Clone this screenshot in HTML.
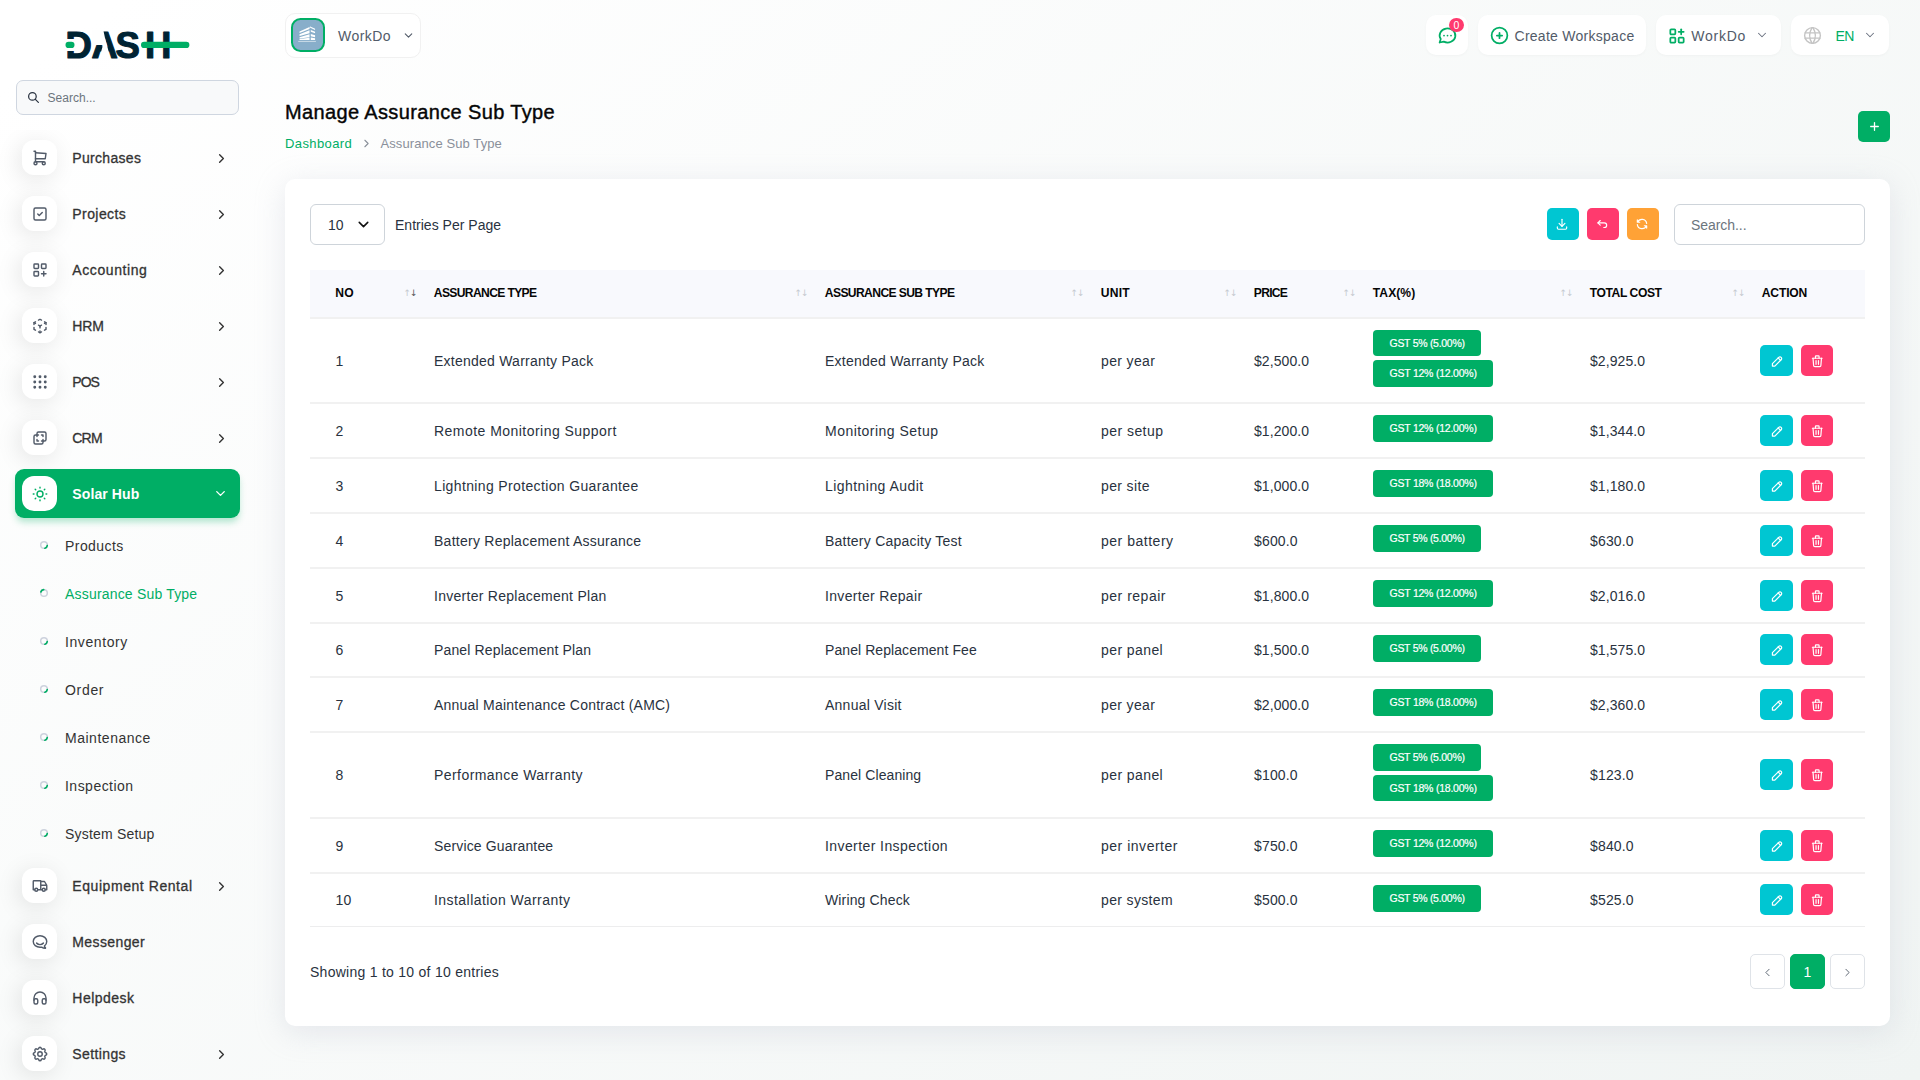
<!DOCTYPE html><html lang="en"><head><meta charset="utf-8"><title>Manage Assurance Sub Type</title><style>*{box-sizing:border-box;margin:0;padding:0}
html,body{width:1920px;height:1080px;overflow:hidden}
body{font-family:"Liberation Sans",sans-serif;font-size:14px;color:#293240;background:linear-gradient(141.55deg,rgba(240,244,243,0) 3.46%,#f0f4f3 99.86%),#fff;position:relative}
.ic{display:block;flex:none}
a{text-decoration:none;color:inherit}
span{white-space:nowrap}
.sidebar{position:absolute;left:0;top:0;width:255px;height:1080px}
.navwrap{position:absolute;left:0;top:130px;width:270px;height:950px;overflow:hidden}
.logo{position:absolute;left:60px;top:25px}
.sbsearch{position:absolute;left:16px;top:80px;width:223px;height:35px;border:1px solid #cfd6e0;border-radius:7px;background:#f8f9fa;display:flex;align-items:center;padding-left:10px;color:#6c757d;font-size:12px}
.sbsearch span{margin-left:7.5px;position:relative;top:.5px}
.item{position:absolute;left:15px;width:225px;height:49px;border-radius:9px;display:flex;align-items:center;padding-left:7px;color:#333}
.micon .ic{position:relative;top:.8px}
.micon{width:35px;height:35px;border-radius:12px;background:#fff;display:flex;align-items:center;justify-content:center;box-shadow:-3px 4px 23px rgba(0,0,0,.1);color:#525b69}
.mtext{margin-left:15.3px;font-size:14px;font-weight:400;-webkit-text-stroke:.3px currentColor;position:relative;top:.5px}
.arr{position:absolute;left:199px;top:18.3px;color:#333}
.item.active{background:#00AE65;color:#fff;box-shadow:0 5px 7px -1px rgba(0,174,101,.3)}
.item.active .micon{color:#00AE65;box-shadow:none}
.item.active .mtext{font-weight:700;-webkit-text-stroke:0}
.item.active .arr{color:#fff;left:197.5px;top:17.2px}
.sub{position:absolute;left:39px;height:24px;display:flex;align-items:center;font-size:14px;color:#333}
.sub .bul{margin-right:16px;position:relative;top:-.5px}
.sub.act{color:#00AE65}
.ws{position:absolute;left:285.2px;top:12.5px;width:136.3px;height:45px;border:1px solid #f1f1f1;border-radius:10px;background:#fff;display:flex;align-items:center;padding-left:4.8px;color:#525b69}
.avatar{width:34px;height:34px;border-radius:9.5px;border:2px solid #00AE65;background:#88aeca;position:relative;overflow:hidden;flex:none}.avatar svg{position:absolute;left:-2px;top:-2px}
.wsn{margin-left:13px;font-size:14px;margin-right:11px;color:#525b69;position:relative;top:.5px}
.hbtn{position:absolute;top:15px;height:40px;padding-top:1.2px;border-radius:10px;background:#fff;display:flex;align-items:center;padding-left:11.5px;color:#525b69;box-shadow:0 1px 3px rgba(0,0,0,.03)}
.ht{font-size:14px;color:#525b69;position:relative;top:.2px}
.ht.en{color:#00AE65}
.hch{position:absolute;right:11.7px;top:12.9px;color:#6b7280}
.bdg{position:absolute;left:23px;top:3px;width:15px;height:14.4px;padding-top:0;border-radius:50%;background:#FF3A6E;color:#fff;font-size:10.5px;display:flex;align-items:center;justify-content:center}
.title{position:absolute;left:285px;top:98px;font-size:20px;font-weight:400;color:#060606;line-height:28px;-webkit-text-stroke:.4px currentColor;white-space:nowrap}
.crumb{position:absolute;left:285px;top:133px;height:20px;display:flex;align-items:center;font-size:13px}
.c1{color:#00AE65}.c2{color:#8a909a}.csep{margin:0 7.5px 0 7.8px}
.addbtn{position:absolute;left:1858px;top:111px;width:32px;height:31px;border-radius:5px;background:#00AE65;display:flex;align-items:center;justify-content:center}
.card{position:absolute;left:285px;top:179px;width:1605px;height:847px;background:#fff;border-radius:10px;box-shadow:0 6px 30px rgba(182,186,203,.3)}
.sel{position:absolute;left:25px;top:25px;width:75px;height:41px;border:1px solid #ced4da;border-radius:6px;display:flex;align-items:center;padding-left:17px;font-size:14px;color:#293240}
.sel span{position:relative;top:.5px}
.sel .ic{margin-left:11px}
.epp{position:absolute;left:110px;top:35.8px;line-height:21px}
.tb{position:absolute;top:29px;width:32px;height:32px;padding:0 1.6px .5px 0;border-radius:5px;display:flex;align-items:center;justify-content:center}
.tsearch{position:absolute;left:1389px;top:25px;width:191px;height:41px;border:1px solid #ced4da;border-radius:6px;display:flex;align-items:center;padding-left:16px;color:#6c757d}
.thead{position:absolute;left:25px;top:91px;width:1555px;height:47px;background:#f8f9fd}
.th{position:absolute;top:15px;font-size:12.1px;font-weight:700;color:#060606;line-height:16px;white-space:nowrap}
.sort{position:absolute;top:14.5px;font-size:9px;line-height:16px;color:#c5c9d0;font-family:"DejaVu Sans",sans-serif;letter-spacing:-1px}
.sort i,.sort b{font-style:normal;font-weight:400}
.sort.s1 b{color:#555}
.tr{position:absolute;left:25px;width:1555px}
.hl{position:absolute;left:25px;width:1555px;height:2px;background:#f1f1f1}
.hl.last{height:1px;background:#ededee}
.td{position:absolute;top:50%;margin-top:-9.9px;line-height:21px;white-space:nowrap;color:#293240}
.tax{position:absolute;left:1063px;top:12px;display:flex;flex-direction:column;align-items:flex-start}
.bg{display:block;height:26.25px;line-height:26px;padding:0 16.5px;background:#00AE65;color:#fff;border-radius:4px;font-size:10.5px;margin-bottom:4px;-webkit-text-stroke:.2px #fff;white-space:nowrap}
.ab{position:absolute;top:50%;margin-top:-15.6px;padding:1.3px 0 0 .8px;width:32px;height:31px;border-radius:5px;display:flex;align-items:center;justify-content:center}
.info{position:absolute;left:25px;top:782.5px;line-height:21px}
.pg{position:absolute;top:775px;width:35px;height:35px;padding-top:1.6px;border:1px solid #dfe3e8;border-radius:5px;display:flex;align-items:center;justify-content:center;background:#fff}
.pg.on{background:#00AE65;border-color:#00AE65;color:#fff;font-size:14px}
</style></head><body>
<nav class="sidebar">
<div class="logo"><svg width="140" height="40" viewBox="60 25 140 40"><text x="65.6 91.5 115.5 145" y="58" font-family="'Liberation Sans',sans-serif" font-weight="700" font-size="36.5" fill="#002333" stroke="#002333" stroke-width="1.1" stroke-linejoin="round">DASH</text><rect x="64" y="39" width="12" height="12" fill="#fefefe"/><polygon points="92.3,30 103.3,30 105,38 106.9,45 108.9,52.5 100.9,52.5 103,45 92.3,45" fill="#fefefe"/><rect x="65.5" y="41.8" width="9" height="6.2" rx="3.1" fill="#00AE65"/><rect x="141" y="41.8" width="48.4" height="6.2" rx="3.1" fill="#00AE65"/></svg></div>
<div class="sbsearch"><svg class="ic" width="13" height="13" viewBox="0 0 24 24" fill="none" stroke="#293240" stroke-width="2.3" stroke-linecap="round" stroke-linejoin="round" ><circle cx="10" cy="10" r="7"/><path d="M21 21l-6 -6"/></svg><span style="letter-spacing:0.019px;">Search...</span></div>
<div class="navwrap">
<a class="item" style="top:3px"><span class="micon"><svg class="ic" width="18" height="18" viewBox="0 0 24 24" fill="none" stroke="currentColor" stroke-width="1.9" stroke-linecap="round" stroke-linejoin="round" ><circle cx="6" cy="19" r="2"/><circle cx="17" cy="19" r="2"/><path d="M17 17h-11v-14h-2"/><path d="M6 5l14 1l-1 7h-13"/></svg></span><span class="mtext" style="letter-spacing:0.316px;">Purchases</span><span class="arr"><svg class="ic" width="15" height="15" viewBox="0 0 24 24" fill="none" stroke="currentColor" stroke-width="2.2" stroke-linecap="round" stroke-linejoin="round" ><path d="M9 6l6 6l-6 6"/></svg></span></a>
<a class="item" style="top:59px"><span class="micon"><svg class="ic" width="18" height="18" viewBox="0 0 24 24" fill="none" stroke="currentColor" stroke-width="1.9" stroke-linecap="round" stroke-linejoin="round" ><rect x="4" y="4" width="16" height="16" rx="2"/><path d="M9 12l2 2l4 -4"/></svg></span><span class="mtext" style="letter-spacing:0.428px;">Projects</span><span class="arr"><svg class="ic" width="15" height="15" viewBox="0 0 24 24" fill="none" stroke="currentColor" stroke-width="2.2" stroke-linecap="round" stroke-linejoin="round" ><path d="M9 6l6 6l-6 6"/></svg></span></a>
<a class="item" style="top:115px"><span class="micon"><svg class="ic" width="18" height="18" viewBox="0 0 24 24" fill="none" stroke="currentColor" stroke-width="1.9" stroke-linecap="round" stroke-linejoin="round" ><rect x="4" y="4" width="6" height="6" rx="1"/><rect x="14" y="4" width="6" height="6" rx="1"/><rect x="4" y="14" width="6" height="6" rx="1"/><path d="M14 17h6m-3 -3v6"/></svg></span><span class="mtext" style="letter-spacing:0.592px;">Accounting</span><span class="arr"><svg class="ic" width="15" height="15" viewBox="0 0 24 24" fill="none" stroke="currentColor" stroke-width="2.2" stroke-linecap="round" stroke-linejoin="round" ><path d="M9 6l6 6l-6 6"/></svg></span></a>
<a class="item" style="top:171px"><span class="micon"><svg class="ic" width="18" height="18" viewBox="0 0 24 24" fill="none" stroke="currentColor" stroke-width="1.9" stroke-linecap="round" stroke-linejoin="round" ><path d="M6 17.6l-2 -1.1v-2.5"/><path d="M4 10v-2.5l2 -1.1"/><path d="M10 4.1l2 -1.1l2 1.1"/><path d="M18 6.4l2 1.1v2.5"/><path d="M20 14v2.5l-2 1.12"/><path d="M14 19.9l-2 1.1l-2 -1.1"/><path d="M12 12l2 -1.1"/><path d="M18 8.6l2 -1.1"/><path d="M12 12l0 2.5"/><path d="M12 18.5l0 2.5"/><path d="M12 12l-2 -1.12"/><path d="M6 8.6l-2 -1.1"/></svg></span><span class="mtext" style="letter-spacing:-0.164px;">HRM</span><span class="arr"><svg class="ic" width="15" height="15" viewBox="0 0 24 24" fill="none" stroke="currentColor" stroke-width="2.2" stroke-linecap="round" stroke-linejoin="round" ><path d="M9 6l6 6l-6 6"/></svg></span></a>
<a class="item" style="top:227px"><span class="micon"><svg class="ic" width="18" height="18" viewBox="0 0 24 24" fill="none" stroke="currentColor" stroke-width="1.9" stroke-linecap="round" stroke-linejoin="round" ><circle cx="5" cy="5" r="1"/><circle cx="12" cy="5" r="1"/><circle cx="19" cy="5" r="1"/><circle cx="5" cy="12" r="1"/><circle cx="12" cy="12" r="1"/><circle cx="19" cy="12" r="1"/><circle cx="5" cy="19" r="1"/><circle cx="12" cy="19" r="1"/><circle cx="19" cy="19" r="1"/></svg></span><span class="mtext" style="letter-spacing:-0.993px;">POS</span><span class="arr"><svg class="ic" width="15" height="15" viewBox="0 0 24 24" fill="none" stroke="currentColor" stroke-width="2.2" stroke-linecap="round" stroke-linejoin="round" ><path d="M9 6l6 6l-6 6"/></svg></span></a>
<a class="item" style="top:283px"><span class="micon"><svg class="ic" width="18" height="18" viewBox="0 0 24 24" fill="none" stroke="currentColor" stroke-width="1.9" stroke-linecap="round" stroke-linejoin="round" ><path d="M16 16v2a2 2 0 0 1 -2 2h-8a2 2 0 0 1 -2 -2v-8a2 2 0 0 1 2 -2h2v-2a2 2 0 0 1 2 -2h8a2 2 0 0 1 2 2v8a2 2 0 0 1 -2 2h-2"/><path d="M10 8l-2 0l0 2"/><path d="M8 14l0 2l2 0"/><path d="M14 8l2 0l0 2"/><path d="M16 14l0 2l-2 0"/></svg></span><span class="mtext" style="letter-spacing:-0.797px;">CRM</span><span class="arr"><svg class="ic" width="15" height="15" viewBox="0 0 24 24" fill="none" stroke="currentColor" stroke-width="2.2" stroke-linecap="round" stroke-linejoin="round" ><path d="M9 6l6 6l-6 6"/></svg></span></a>
<a class="item active" style="top:339px"><span class="micon"><svg class="ic" width="18" height="18" viewBox="0 0 24 24" fill="none" stroke="currentColor" stroke-width="1.9" stroke-linecap="round" stroke-linejoin="round" ><circle cx="12" cy="12" r="4"/><path d="M3 12h1m8 -9v1m8 8h1m-9 8v1m-6.4 -15.4l.7 .7m12.1 -.7l-.7 .7m0 11.4l.7 .7m-12.1 -.7l-.7 .7"/></svg></span><span class="mtext" style="letter-spacing:0.108px;">Solar Hub</span><span class="arr"><svg class="ic" width="15" height="15" viewBox="0 0 24 24" fill="none" stroke="currentColor" stroke-width="2.2" stroke-linecap="round" stroke-linejoin="round" ><path d="M6 9l6 6l6 -6"/></svg></span></a>
<a class="sub" style="top:403.9px"><svg class="bul" width="10" height="10" viewBox="0 0 10 10"><circle cx="5" cy="5" r="3.3" fill="none" stroke="#cdd2dd" stroke-width="1.5"/><path d="M8.25 5.6A3.3 3.3 0 0 1 5.9 8.2" fill="none" stroke="#00AE65" stroke-width="1.7" stroke-linecap="round" /></svg><span style="letter-spacing:0.438px;">Products</span></a>
<a class="sub act" style="top:451.9px"><svg class="bul" width="10" height="10" viewBox="0 0 10 10"><circle cx="5" cy="5" r="3.3" fill="none" stroke="#cdd2dd" stroke-width="1.5"/><path d="M8.25 5.6A3.3 3.3 0 0 1 5.9 8.2" fill="none" stroke="#00AE65" stroke-width="1.7" stroke-linecap="round" transform="rotate(190 5 5)"/></svg><span style="letter-spacing:0.188px;">Assurance Sub Type</span></a>
<a class="sub" style="top:499.9px"><svg class="bul" width="10" height="10" viewBox="0 0 10 10"><circle cx="5" cy="5" r="3.3" fill="none" stroke="#cdd2dd" stroke-width="1.5"/><path d="M8.25 5.6A3.3 3.3 0 0 1 5.9 8.2" fill="none" stroke="#00AE65" stroke-width="1.7" stroke-linecap="round" /></svg><span style="letter-spacing:0.583px;">Inventory</span></a>
<a class="sub" style="top:547.9px"><svg class="bul" width="10" height="10" viewBox="0 0 10 10"><circle cx="5" cy="5" r="3.3" fill="none" stroke="#cdd2dd" stroke-width="1.5"/><path d="M8.25 5.6A3.3 3.3 0 0 1 5.9 8.2" fill="none" stroke="#00AE65" stroke-width="1.7" stroke-linecap="round" /></svg><span style="letter-spacing:0.687px;">Order</span></a>
<a class="sub" style="top:595.9px"><svg class="bul" width="10" height="10" viewBox="0 0 10 10"><circle cx="5" cy="5" r="3.3" fill="none" stroke="#cdd2dd" stroke-width="1.5"/><path d="M8.25 5.6A3.3 3.3 0 0 1 5.9 8.2" fill="none" stroke="#00AE65" stroke-width="1.7" stroke-linecap="round" /></svg><span style="letter-spacing:0.518px;">Maintenance</span></a>
<a class="sub" style="top:643.9px"><svg class="bul" width="10" height="10" viewBox="0 0 10 10"><circle cx="5" cy="5" r="3.3" fill="none" stroke="#cdd2dd" stroke-width="1.5"/><path d="M8.25 5.6A3.3 3.3 0 0 1 5.9 8.2" fill="none" stroke="#00AE65" stroke-width="1.7" stroke-linecap="round" /></svg><span style="letter-spacing:0.479px;">Inspection</span></a>
<a class="sub" style="top:691.9px"><svg class="bul" width="10" height="10" viewBox="0 0 10 10"><circle cx="5" cy="5" r="3.3" fill="none" stroke="#cdd2dd" stroke-width="1.5"/><path d="M8.25 5.6A3.3 3.3 0 0 1 5.9 8.2" fill="none" stroke="#00AE65" stroke-width="1.7" stroke-linecap="round" /></svg><span style="letter-spacing:0.2px;">System Setup</span></a>
<a class="item" style="top:731px"><span class="micon"><svg class="ic" width="18" height="18" viewBox="0 0 24 24" fill="none" stroke="currentColor" stroke-width="1.9" stroke-linecap="round" stroke-linejoin="round" ><circle cx="7" cy="17" r="2"/><circle cx="17" cy="17" r="2"/><path d="M5 17h-2v-11a1 1 0 0 1 1 -1h9v12m-4 0h6m4 0h2v-6h-8m0 -5h5l3 5"/></svg></span><span class="mtext" style="letter-spacing:0.563px;">Equipment Rental</span><span class="arr"><svg class="ic" width="15" height="15" viewBox="0 0 24 24" fill="none" stroke="currentColor" stroke-width="2.2" stroke-linecap="round" stroke-linejoin="round" ><path d="M9 6l6 6l-6 6"/></svg></span></a>
<a class="item" style="top:787px"><span class="micon"><svg class="ic" width="18" height="18" viewBox="0 0 24 24" fill="none" stroke="currentColor" stroke-width="1.9" stroke-linecap="round" stroke-linejoin="round" ><path d="M17.802 17.292s.077 -.055 .2 -.149c1.843 -1.425 3 -3.49 3 -5.789c0 -4.286 -4.03 -7.764 -9 -7.764c-4.97 0 -9 3.478 -9 7.764c0 4.288 4.03 7.646 9 7.646c.424 0 1.12 -.028 2.088 -.084c1.262 .82 3.104 1.493 4.716 1.493c.499 0 .734 -.41 .414 -.828c-.486 -.596 -1.156 -1.551 -1.416 -2.29z"/><path d="M7.5 13.5c2.5 2.5 6.5 2.5 9 0"/></svg></span><span class="mtext" style="letter-spacing:0.393px;">Messenger</span></a>
<a class="item" style="top:843px"><span class="micon"><svg class="ic" width="18" height="18" viewBox="0 0 24 24" fill="none" stroke="currentColor" stroke-width="1.9" stroke-linecap="round" stroke-linejoin="round" ><rect x="4" y="13" width="5" height="7" rx="2"/><rect x="15" y="13" width="5" height="7" rx="2"/><path d="M4 15v-3a8 8 0 0 1 16 0v3"/></svg></span><span class="mtext" style="letter-spacing:0.478px;">Helpdesk</span></a>
<a class="item" style="top:899px"><span class="micon"><svg class="ic" width="18" height="18" viewBox="0 0 24 24" fill="none" stroke="currentColor" stroke-width="1.9" stroke-linecap="round" stroke-linejoin="round" ><path d="M10.325 4.317c.426 -1.756 2.924 -1.756 3.35 0a1.724 1.724 0 0 0 2.573 1.066c1.543 -.94 3.31 .826 2.37 2.37a1.724 1.724 0 0 0 1.065 2.572c1.756 .426 1.756 2.924 0 3.35a1.724 1.724 0 0 0 -1.066 2.573c.94 1.543 -.826 3.31 -2.37 2.37a1.724 1.724 0 0 0 -2.572 1.065c-.426 1.756 -2.924 1.756 -3.35 0a1.724 1.724 0 0 0 -2.573 -1.066c-1.543 .94 -3.31 -.826 -2.37 -2.37a1.724 1.724 0 0 0 -1.065 -2.572c-1.756 -.426 -1.756 -2.924 0 -3.35a1.724 1.724 0 0 0 1.066 -2.573c-.94 -1.543 .826 -3.31 2.37 -2.37c1 .608 2.296 .07 2.572 -1.065z"/><circle cx="12" cy="12" r="3"/></svg></span><span class="mtext" style="letter-spacing:0.388px;">Settings</span><span class="arr"><svg class="ic" width="15" height="15" viewBox="0 0 24 24" fill="none" stroke="currentColor" stroke-width="2.2" stroke-linecap="round" stroke-linejoin="round" ><path d="M9 6l6 6l-6 6"/></svg></span></a>
</div></nav>
<div class="ws"><span class="avatar"><svg width="34" height="34" viewBox="120 140 798 798" fill="#fff"><path d="M320 455L555 350V400L320 490z M320 520L555 430V500L320 560z M320 590L555 520V590L320 622z M320 635L555 605V655H320z M555 352L573 338L685 395V422L573 366z M585 420L685 465V500L585 465z M585 515L685 545V590L585 570z M585 600L685 615V655H585z"/><rect x="290" y="678" width="415" height="22" opacity=".6"/></svg></span><span class="wsn" style="letter-spacing:0.472px;">WorkDo</span><svg class="ic" width="13" height="13" viewBox="0 0 24 24" fill="none" stroke="currentColor" stroke-width="2" stroke-linecap="round" stroke-linejoin="round" ><path d="M6 9l6 6l6 -6"/></svg></div>
<div class="hbtn" style="left:1426px;width:42px;padding-left:11px"><svg class="ic" width="21" height="21" viewBox="0 0 24 24" fill="none" stroke="#00AE65" stroke-width="2.0" stroke-linecap="round" stroke-linejoin="round" ><path d="M3 20l1.3 -3.9a9 8 0 1 1 3.4 2.9l-4.7 1"/><path d="M12 12l0 .01"/><path d="M8 12l0 .01"/><path d="M16 12l0 .01"/></svg><span class="bdg">0</span></div>
<div class="hbtn" style="left:1478px;width:168px;padding-left:10.5px"><svg class="ic" width="21" height="21" viewBox="0 0 24 24" fill="none" stroke="#00AE65" stroke-width="2.0" stroke-linecap="round" stroke-linejoin="round" ><circle cx="12" cy="12" r="9"/><path d="M9 12h6"/><path d="M12 9v6"/></svg><span class="ht" style="letter-spacing:0.27px;margin-left:5px">Create Workspace</span></div>
<div class="hbtn" style="left:1656px;width:125px;padding-left:10.8px"><svg class="ic" width="20" height="20" viewBox="0 0 24 24" fill="none" stroke="#00AE65" stroke-width="2.1" stroke-linecap="round" stroke-linejoin="round" ><rect x="4" y="4" width="6" height="6" rx="1"/><rect x="4" y="14" width="6" height="6" rx="1"/><rect x="14" y="14" width="6" height="6" rx="1"/><path d="M14 7l6 0"/><path d="M17 4l0 6"/></svg><span class="ht" style="letter-spacing:0.748px;margin-left:4.5px">WorkDo</span><span class="hch"><svg class="ic" width="14" height="14" viewBox="0 0 24 24" fill="none" stroke="currentColor" stroke-width="1.8" stroke-linecap="round" stroke-linejoin="round" ><path d="M6 9l6 6l6 -6"/></svg></span></div>
<div class="hbtn" style="left:1791px;width:98px;padding-left:11px"><svg class="ic" width="21" height="21" viewBox="0 0 24 24" fill="none" stroke="#c4c4c4" stroke-width="1.6" stroke-linecap="round" stroke-linejoin="round" ><circle cx="12" cy="12" r="9"/><path d="M3.6 9h16.8"/><path d="M3.6 15h16.8"/><path d="M11.5 3a17 17 0 0 0 0 18"/><path d="M12.5 3a17 17 0 0 1 0 18"/></svg><span class="ht en" style="letter-spacing:-0.556px;margin-left:12.5px">EN</span><span class="hch"><svg class="ic" width="14" height="14" viewBox="0 0 24 24" fill="none" stroke="currentColor" stroke-width="1.8" stroke-linecap="round" stroke-linejoin="round" ><path d="M6 9l6 6l6 -6"/></svg></span></div>
<h4 class="title"><span style="letter-spacing:0.363px;">Manage Assurance Sub Type</span></h4>
<div class="crumb"><span class="c1" style="letter-spacing:0.4px;">Dashboard</span><span class="csep"><svg class="ic" width="13" height="13" viewBox="0 0 24 24" fill="none" stroke="#8a909a" stroke-width="2" stroke-linecap="round" stroke-linejoin="round" ><path d="M9 6l6 6l-6 6"/></svg></span><span class="c2" style="letter-spacing:0.094px;">Assurance Sub Type</span></div>
<div class="addbtn"><svg class="ic" width="13" height="13" viewBox="0 0 24 24" fill="none" stroke="#fff" stroke-width="2.4" stroke-linecap="round" stroke-linejoin="round" ><path d="M12 5v14"/><path d="M5 12h14"/></svg></div>
<div class="card">
<div class="sel"><span>10</span><svg class="ic" width="17" height="17" viewBox="0 0 24 24" fill="none" stroke="#111" stroke-width="2.2" stroke-linecap="round" stroke-linejoin="round" ><path d="M6 9l6 6l6 -6"/></svg></div><div class="epp"><span style="letter-spacing:0.017px;">Entries Per Page</span></div>
<div class="tb" style="left:1262px;background:#00C6D2"><svg class="ic" width="14" height="14" viewBox="0 0 24 24" fill="none" stroke="#fff" stroke-width="2" stroke-linecap="round" stroke-linejoin="round" ><path d="M4 17v2a2 2 0 0 0 2 2h12a2 2 0 0 0 2 -2v-2"/><path d="M7 11l5 5l5 -5"/><path d="M12 4l0 12"/></svg></div>
<div class="tb" style="left:1302px;background:#FF3A6E"><svg class="ic" width="14" height="14" viewBox="0 0 24 24" fill="none" stroke="#fff" stroke-width="2" stroke-linecap="round" stroke-linejoin="round" ><path d="M9 14l-4 -4l4 -4"/><path d="M5 10h11a4 4 0 1 1 0 8h-1"/></svg></div>
<div class="tb" style="left:1342px;background:#FFA236"><svg class="ic" width="14" height="14" viewBox="0 0 24 24" fill="none" stroke="#fff" stroke-width="2" stroke-linecap="round" stroke-linejoin="round" ><path d="M20 11a8.1 8.1 0 0 0 -15.5 -2m-.5 -4v4h4"/><path d="M4 13a8.1 8.1 0 0 0 15.5 2m.5 4v-4h-4"/></svg></div>
<div class="tsearch"><span style="letter-spacing:-0.062px;">Search...</span></div>
<div class="thead">
<span class="th" style="letter-spacing:0.23px;left:25.3px;">NO</span>
<span class="sort s1" style="left:93.5px"><i>↑</i><b>↓</b></span>
<span class="th" style="letter-spacing:-0.633px;left:123.8px;">ASSURANCE TYPE</span>
<span class="sort" style="left:484.5px"><i>↑</i><b>↓</b></span>
<span class="th" style="letter-spacing:-0.603px;left:514.8px;">ASSURANCE SUB TYPE</span>
<span class="sort" style="left:760.5px"><i>↑</i><b>↓</b></span>
<span class="th" style="letter-spacing:0.245px;left:790.8px;">UNIT</span>
<span class="sort" style="left:913.5px"><i>↑</i><b>↓</b></span>
<span class="th" style="letter-spacing:-0.734px;left:943.8px;">PRICE</span>
<span class="sort" style="left:1032.5px"><i>↑</i><b>↓</b></span>
<span class="th" style="letter-spacing:0.065px;left:1062.8px;">TAX(%)</span>
<span class="sort" style="left:1249.5px"><i>↑</i><b>↓</b></span>
<span class="th" style="letter-spacing:-0.422px;left:1279.8px;">TOTAL COST</span>
<span class="sort" style="left:1421.5px"><i>↑</i><b>↓</b></span>
<span class="th" style="letter-spacing:-0.16px;left:1451.8px;">ACTION</span>
</div>
<div class="hl" style="top:138px"></div>
<div class="tr" style="top:139.0px;height:85.0px">
<span class="td" style="letter-spacing:0.208px;left:25.5px;">1</span>
<span class="td" style="letter-spacing:0.237px;left:124px;">Extended Warranty Pack</span>
<span class="td" style="letter-spacing:0.237px;left:515px;">Extended Warranty Pack</span>
<span class="td" style="letter-spacing:0.351px;left:791px;">per year</span>
<span class="td" style="letter-spacing:0.086px;left:944px;">$2,500.0</span>
<span class="tax"><span class="bg" style="letter-spacing:-0.286px;height:26px;margin-bottom:4px;">GST 5% (5.00%)</span><span class="bg" style="letter-spacing:-0.23px;height:27px;">GST 12% (12.00%)</span></span>
<span class="td" style="letter-spacing:0.086px;left:1280px;">$2,925.0</span>
<span class="ab" style="left:1450px;width:33px;background:#00C6D2"><svg class="ic" width="14.5" height="14.5" viewBox="0 0 24 24" fill="none" stroke="#fff" stroke-width="2" stroke-linecap="round" stroke-linejoin="round" ><path d="M4 20h4l10.5 -10.5a2.828 2.828 0 1 0 -4 -4l-10.5 10.5v4"/><path d="M13.5 6.5l4 4"/></svg></span>
<span class="ab" style="left:1491px;background:#FF3A6E"><svg class="ic" width="14.5" height="14.5" viewBox="0 0 24 24" fill="none" stroke="#fff" stroke-width="2" stroke-linecap="round" stroke-linejoin="round" ><path d="M4 7l16 0"/><path d="M10 11l0 6"/><path d="M14 11l0 6"/><path d="M5 7l1 12a2 2 0 0 0 2 2h8a2 2 0 0 0 2 -2l1 -12"/><path d="M9 7v-3a1 1 0 0 1 1 -1h4a1 1 0 0 1 1 1v3"/></svg></span>
</div>
<div class="hl" style="top:223.0px"></div>
<div class="tr" style="top:224.0px;height:55.0px">
<span class="td" style="letter-spacing:0.208px;left:25.5px;">2</span>
<span class="td" style="letter-spacing:0.462px;left:124px;">Remote Monitoring Support</span>
<span class="td" style="letter-spacing:0.474px;left:515px;">Monitoring Setup</span>
<span class="td" style="letter-spacing:0.451px;left:791px;">per setup</span>
<span class="td" style="letter-spacing:0.086px;left:944px;">$1,200.0</span>
<span class="tax"><span class="bg" style="letter-spacing:-0.23px;height:26.5px;">GST 12% (12.00%)</span></span>
<span class="td" style="letter-spacing:0.086px;left:1280px;">$1,344.0</span>
<span class="ab" style="left:1450px;width:33px;background:#00C6D2"><svg class="ic" width="14.5" height="14.5" viewBox="0 0 24 24" fill="none" stroke="#fff" stroke-width="2" stroke-linecap="round" stroke-linejoin="round" ><path d="M4 20h4l10.5 -10.5a2.828 2.828 0 1 0 -4 -4l-10.5 10.5v4"/><path d="M13.5 6.5l4 4"/></svg></span>
<span class="ab" style="left:1491px;background:#FF3A6E"><svg class="ic" width="14.5" height="14.5" viewBox="0 0 24 24" fill="none" stroke="#fff" stroke-width="2" stroke-linecap="round" stroke-linejoin="round" ><path d="M4 7l16 0"/><path d="M10 11l0 6"/><path d="M14 11l0 6"/><path d="M5 7l1 12a2 2 0 0 0 2 2h8a2 2 0 0 0 2 -2l1 -12"/><path d="M9 7v-3a1 1 0 0 1 1 -1h4a1 1 0 0 1 1 1v3"/></svg></span>
</div>
<div class="hl" style="top:278.0px"></div>
<div class="tr" style="top:279.0px;height:55.0px">
<span class="td" style="letter-spacing:0.208px;left:25.5px;">3</span>
<span class="td" style="letter-spacing:0.359px;left:124px;">Lightning Protection Guarantee</span>
<span class="td" style="letter-spacing:0.447px;left:515px;">Lightning Audit</span>
<span class="td" style="letter-spacing:0.36px;left:791px;">per site</span>
<span class="td" style="letter-spacing:0.086px;left:944px;">$1,000.0</span>
<span class="tax"><span class="bg" style="letter-spacing:-0.23px;height:26.5px;">GST 18% (18.00%)</span></span>
<span class="td" style="letter-spacing:0.086px;left:1280px;">$1,180.0</span>
<span class="ab" style="left:1450px;width:33px;background:#00C6D2"><svg class="ic" width="14.5" height="14.5" viewBox="0 0 24 24" fill="none" stroke="#fff" stroke-width="2" stroke-linecap="round" stroke-linejoin="round" ><path d="M4 20h4l10.5 -10.5a2.828 2.828 0 1 0 -4 -4l-10.5 10.5v4"/><path d="M13.5 6.5l4 4"/></svg></span>
<span class="ab" style="left:1491px;background:#FF3A6E"><svg class="ic" width="14.5" height="14.5" viewBox="0 0 24 24" fill="none" stroke="#fff" stroke-width="2" stroke-linecap="round" stroke-linejoin="round" ><path d="M4 7l16 0"/><path d="M10 11l0 6"/><path d="M14 11l0 6"/><path d="M5 7l1 12a2 2 0 0 0 2 2h8a2 2 0 0 0 2 -2l1 -12"/><path d="M9 7v-3a1 1 0 0 1 1 -1h4a1 1 0 0 1 1 1v3"/></svg></span>
</div>
<div class="hl" style="top:333.0px"></div>
<div class="tr" style="top:334.0px;height:55.0px">
<span class="td" style="letter-spacing:0.208px;left:25.5px;">4</span>
<span class="td" style="letter-spacing:0.255px;left:124px;">Battery Replacement Assurance</span>
<span class="td" style="letter-spacing:0.236px;left:515px;">Battery Capacity Test</span>
<span class="td" style="letter-spacing:0.518px;left:791px;">per battery</span>
<span class="td" style="letter-spacing:0.154px;left:944px;">$600.0</span>
<span class="tax"><span class="bg" style="letter-spacing:-0.286px;height:26.5px;">GST 5% (5.00%)</span></span>
<span class="td" style="letter-spacing:0.154px;left:1280px;">$630.0</span>
<span class="ab" style="left:1450px;width:33px;background:#00C6D2"><svg class="ic" width="14.5" height="14.5" viewBox="0 0 24 24" fill="none" stroke="#fff" stroke-width="2" stroke-linecap="round" stroke-linejoin="round" ><path d="M4 20h4l10.5 -10.5a2.828 2.828 0 1 0 -4 -4l-10.5 10.5v4"/><path d="M13.5 6.5l4 4"/></svg></span>
<span class="ab" style="left:1491px;background:#FF3A6E"><svg class="ic" width="14.5" height="14.5" viewBox="0 0 24 24" fill="none" stroke="#fff" stroke-width="2" stroke-linecap="round" stroke-linejoin="round" ><path d="M4 7l16 0"/><path d="M10 11l0 6"/><path d="M14 11l0 6"/><path d="M5 7l1 12a2 2 0 0 0 2 2h8a2 2 0 0 0 2 -2l1 -12"/><path d="M9 7v-3a1 1 0 0 1 1 -1h4a1 1 0 0 1 1 1v3"/></svg></span>
</div>
<div class="hl" style="top:388.0px"></div>
<div class="tr" style="top:389.0px;height:55.0px">
<span class="td" style="letter-spacing:0.208px;left:25.5px;">5</span>
<span class="td" style="letter-spacing:0.272px;left:124px;">Inverter Replacement Plan</span>
<span class="td" style="letter-spacing:0.318px;left:515px;">Inverter Repair</span>
<span class="td" style="letter-spacing:0.505px;left:791px;">per repair</span>
<span class="td" style="letter-spacing:0.086px;left:944px;">$1,800.0</span>
<span class="tax"><span class="bg" style="letter-spacing:-0.23px;height:26.5px;">GST 12% (12.00%)</span></span>
<span class="td" style="letter-spacing:0.086px;left:1280px;">$2,016.0</span>
<span class="ab" style="left:1450px;width:33px;background:#00C6D2"><svg class="ic" width="14.5" height="14.5" viewBox="0 0 24 24" fill="none" stroke="#fff" stroke-width="2" stroke-linecap="round" stroke-linejoin="round" ><path d="M4 20h4l10.5 -10.5a2.828 2.828 0 1 0 -4 -4l-10.5 10.5v4"/><path d="M13.5 6.5l4 4"/></svg></span>
<span class="ab" style="left:1491px;background:#FF3A6E"><svg class="ic" width="14.5" height="14.5" viewBox="0 0 24 24" fill="none" stroke="#fff" stroke-width="2" stroke-linecap="round" stroke-linejoin="round" ><path d="M4 7l16 0"/><path d="M10 11l0 6"/><path d="M14 11l0 6"/><path d="M5 7l1 12a2 2 0 0 0 2 2h8a2 2 0 0 0 2 -2l1 -12"/><path d="M9 7v-3a1 1 0 0 1 1 -1h4a1 1 0 0 1 1 1v3"/></svg></span>
</div>
<div class="hl" style="top:443.0px"></div>
<div class="tr" style="top:444.0px;height:54.0px">
<span class="td" style="letter-spacing:0.208px;left:25.5px;">6</span>
<span class="td" style="letter-spacing:0.139px;left:124px;">Panel Replacement Plan</span>
<span class="td" style="letter-spacing:0.074px;left:515px;">Panel Replacement Fee</span>
<span class="td" style="letter-spacing:0.416px;left:791px;">per panel</span>
<span class="td" style="letter-spacing:0.086px;left:944px;">$1,500.0</span>
<span class="tax"><span class="bg" style="letter-spacing:-0.286px;height:26.5px;">GST 5% (5.00%)</span></span>
<span class="td" style="letter-spacing:0.086px;left:1280px;">$1,575.0</span>
<span class="ab" style="left:1450px;width:33px;background:#00C6D2"><svg class="ic" width="14.5" height="14.5" viewBox="0 0 24 24" fill="none" stroke="#fff" stroke-width="2" stroke-linecap="round" stroke-linejoin="round" ><path d="M4 20h4l10.5 -10.5a2.828 2.828 0 1 0 -4 -4l-10.5 10.5v4"/><path d="M13.5 6.5l4 4"/></svg></span>
<span class="ab" style="left:1491px;background:#FF3A6E"><svg class="ic" width="14.5" height="14.5" viewBox="0 0 24 24" fill="none" stroke="#fff" stroke-width="2" stroke-linecap="round" stroke-linejoin="round" ><path d="M4 7l16 0"/><path d="M10 11l0 6"/><path d="M14 11l0 6"/><path d="M5 7l1 12a2 2 0 0 0 2 2h8a2 2 0 0 0 2 -2l1 -12"/><path d="M9 7v-3a1 1 0 0 1 1 -1h4a1 1 0 0 1 1 1v3"/></svg></span>
</div>
<div class="hl" style="top:497.0px"></div>
<div class="tr" style="top:498.0px;height:55.0px">
<span class="td" style="letter-spacing:0.208px;left:25.5px;">7</span>
<span class="td" style="letter-spacing:0.227px;left:124px;">Annual Maintenance Contract (AMC)</span>
<span class="td" style="letter-spacing:0.246px;left:515px;">Annual Visit</span>
<span class="td" style="letter-spacing:0.351px;left:791px;">per year</span>
<span class="td" style="letter-spacing:0.086px;left:944px;">$2,000.0</span>
<span class="tax"><span class="bg" style="letter-spacing:-0.23px;height:26.5px;">GST 18% (18.00%)</span></span>
<span class="td" style="letter-spacing:0.086px;left:1280px;">$2,360.0</span>
<span class="ab" style="left:1450px;width:33px;background:#00C6D2"><svg class="ic" width="14.5" height="14.5" viewBox="0 0 24 24" fill="none" stroke="#fff" stroke-width="2" stroke-linecap="round" stroke-linejoin="round" ><path d="M4 20h4l10.5 -10.5a2.828 2.828 0 1 0 -4 -4l-10.5 10.5v4"/><path d="M13.5 6.5l4 4"/></svg></span>
<span class="ab" style="left:1491px;background:#FF3A6E"><svg class="ic" width="14.5" height="14.5" viewBox="0 0 24 24" fill="none" stroke="#fff" stroke-width="2" stroke-linecap="round" stroke-linejoin="round" ><path d="M4 7l16 0"/><path d="M10 11l0 6"/><path d="M14 11l0 6"/><path d="M5 7l1 12a2 2 0 0 0 2 2h8a2 2 0 0 0 2 -2l1 -12"/><path d="M9 7v-3a1 1 0 0 1 1 -1h4a1 1 0 0 1 1 1v3"/></svg></span>
</div>
<div class="hl" style="top:552.0px"></div>
<div class="tr" style="top:553.0px;height:86.0px">
<span class="td" style="letter-spacing:0.208px;left:25.5px;">8</span>
<span class="td" style="letter-spacing:0.434px;left:124px;">Performance Warranty</span>
<span class="td" style="letter-spacing:0.092px;left:515px;">Panel Cleaning</span>
<span class="td" style="letter-spacing:0.416px;left:791px;">per panel</span>
<span class="td" style="letter-spacing:0.154px;left:944px;">$100.0</span>
<span class="tax"><span class="bg" style="letter-spacing:-0.286px;height:26.8px;margin-bottom:4.2px;">GST 5% (5.00%)</span><span class="bg" style="letter-spacing:-0.23px;height:26px;">GST 18% (18.00%)</span></span>
<span class="td" style="letter-spacing:0.154px;left:1280px;">$123.0</span>
<span class="ab" style="left:1450px;width:33px;background:#00C6D2"><svg class="ic" width="14.5" height="14.5" viewBox="0 0 24 24" fill="none" stroke="#fff" stroke-width="2" stroke-linecap="round" stroke-linejoin="round" ><path d="M4 20h4l10.5 -10.5a2.828 2.828 0 1 0 -4 -4l-10.5 10.5v4"/><path d="M13.5 6.5l4 4"/></svg></span>
<span class="ab" style="left:1491px;background:#FF3A6E"><svg class="ic" width="14.5" height="14.5" viewBox="0 0 24 24" fill="none" stroke="#fff" stroke-width="2" stroke-linecap="round" stroke-linejoin="round" ><path d="M4 7l16 0"/><path d="M10 11l0 6"/><path d="M14 11l0 6"/><path d="M5 7l1 12a2 2 0 0 0 2 2h8a2 2 0 0 0 2 -2l1 -12"/><path d="M9 7v-3a1 1 0 0 1 1 -1h4a1 1 0 0 1 1 1v3"/></svg></span>
</div>
<div class="hl" style="top:638.0px"></div>
<div class="tr" style="top:639.0px;height:55.0px">
<span class="td" style="letter-spacing:0.208px;left:25.5px;">9</span>
<span class="td" style="letter-spacing:0.15px;left:124px;">Service Guarantee</span>
<span class="td" style="letter-spacing:0.414px;left:515px;">Inverter Inspection</span>
<span class="td" style="letter-spacing:0.517px;left:791px;">per inverter</span>
<span class="td" style="letter-spacing:0.154px;left:944px;">$750.0</span>
<span class="tax"><span class="bg" style="letter-spacing:-0.23px;height:26.5px;">GST 12% (12.00%)</span></span>
<span class="td" style="letter-spacing:0.154px;left:1280px;">$840.0</span>
<span class="ab" style="left:1450px;width:33px;background:#00C6D2"><svg class="ic" width="14.5" height="14.5" viewBox="0 0 24 24" fill="none" stroke="#fff" stroke-width="2" stroke-linecap="round" stroke-linejoin="round" ><path d="M4 20h4l10.5 -10.5a2.828 2.828 0 1 0 -4 -4l-10.5 10.5v4"/><path d="M13.5 6.5l4 4"/></svg></span>
<span class="ab" style="left:1491px;background:#FF3A6E"><svg class="ic" width="14.5" height="14.5" viewBox="0 0 24 24" fill="none" stroke="#fff" stroke-width="2" stroke-linecap="round" stroke-linejoin="round" ><path d="M4 7l16 0"/><path d="M10 11l0 6"/><path d="M14 11l0 6"/><path d="M5 7l1 12a2 2 0 0 0 2 2h8a2 2 0 0 0 2 -2l1 -12"/><path d="M9 7v-3a1 1 0 0 1 1 -1h4a1 1 0 0 1 1 1v3"/></svg></span>
</div>
<div class="hl" style="top:693.0px"></div>
<div class="tr" style="top:694.0px;height:53.5px">
<span class="td" style="letter-spacing:0.216px;left:25.5px;">10</span>
<span class="td" style="letter-spacing:0.446px;left:124px;">Installation Warranty</span>
<span class="td" style="letter-spacing:0.142px;left:515px;">Wiring Check</span>
<span class="td" style="letter-spacing:0.352px;left:791px;">per system</span>
<span class="td" style="letter-spacing:0.154px;left:944px;">$500.0</span>
<span class="tax"><span class="bg" style="letter-spacing:-0.286px;height:26.5px;">GST 5% (5.00%)</span></span>
<span class="td" style="letter-spacing:0.154px;left:1280px;">$525.0</span>
<span class="ab" style="left:1450px;width:33px;background:#00C6D2"><svg class="ic" width="14.5" height="14.5" viewBox="0 0 24 24" fill="none" stroke="#fff" stroke-width="2" stroke-linecap="round" stroke-linejoin="round" ><path d="M4 20h4l10.5 -10.5a2.828 2.828 0 1 0 -4 -4l-10.5 10.5v4"/><path d="M13.5 6.5l4 4"/></svg></span>
<span class="ab" style="left:1491px;background:#FF3A6E"><svg class="ic" width="14.5" height="14.5" viewBox="0 0 24 24" fill="none" stroke="#fff" stroke-width="2" stroke-linecap="round" stroke-linejoin="round" ><path d="M4 7l16 0"/><path d="M10 11l0 6"/><path d="M14 11l0 6"/><path d="M5 7l1 12a2 2 0 0 0 2 2h8a2 2 0 0 0 2 -2l1 -12"/><path d="M9 7v-3a1 1 0 0 1 1 -1h4a1 1 0 0 1 1 1v3"/></svg></span>
</div>
<div class="hl last" style="top:747.0px"></div>
<div class="info"><span style="letter-spacing:0.266px;">Showing 1 to 10 of 10 entries</span></div>
<div class="pg" style="left:1465px"><svg class="ic" width="13" height="13" viewBox="0 0 24 24" fill="none" stroke="#525b69" stroke-width="1.7" stroke-linecap="round" stroke-linejoin="round" ><path d="M15 6l-6 6l6 6"/></svg></div>
<div class="pg on" style="left:1505px">1</div>
<div class="pg" style="left:1545px"><svg class="ic" width="13" height="13" viewBox="0 0 24 24" fill="none" stroke="#525b69" stroke-width="1.7" stroke-linecap="round" stroke-linejoin="round" ><path d="M9 6l6 6l-6 6"/></svg></div>
</div>
</body></html>
